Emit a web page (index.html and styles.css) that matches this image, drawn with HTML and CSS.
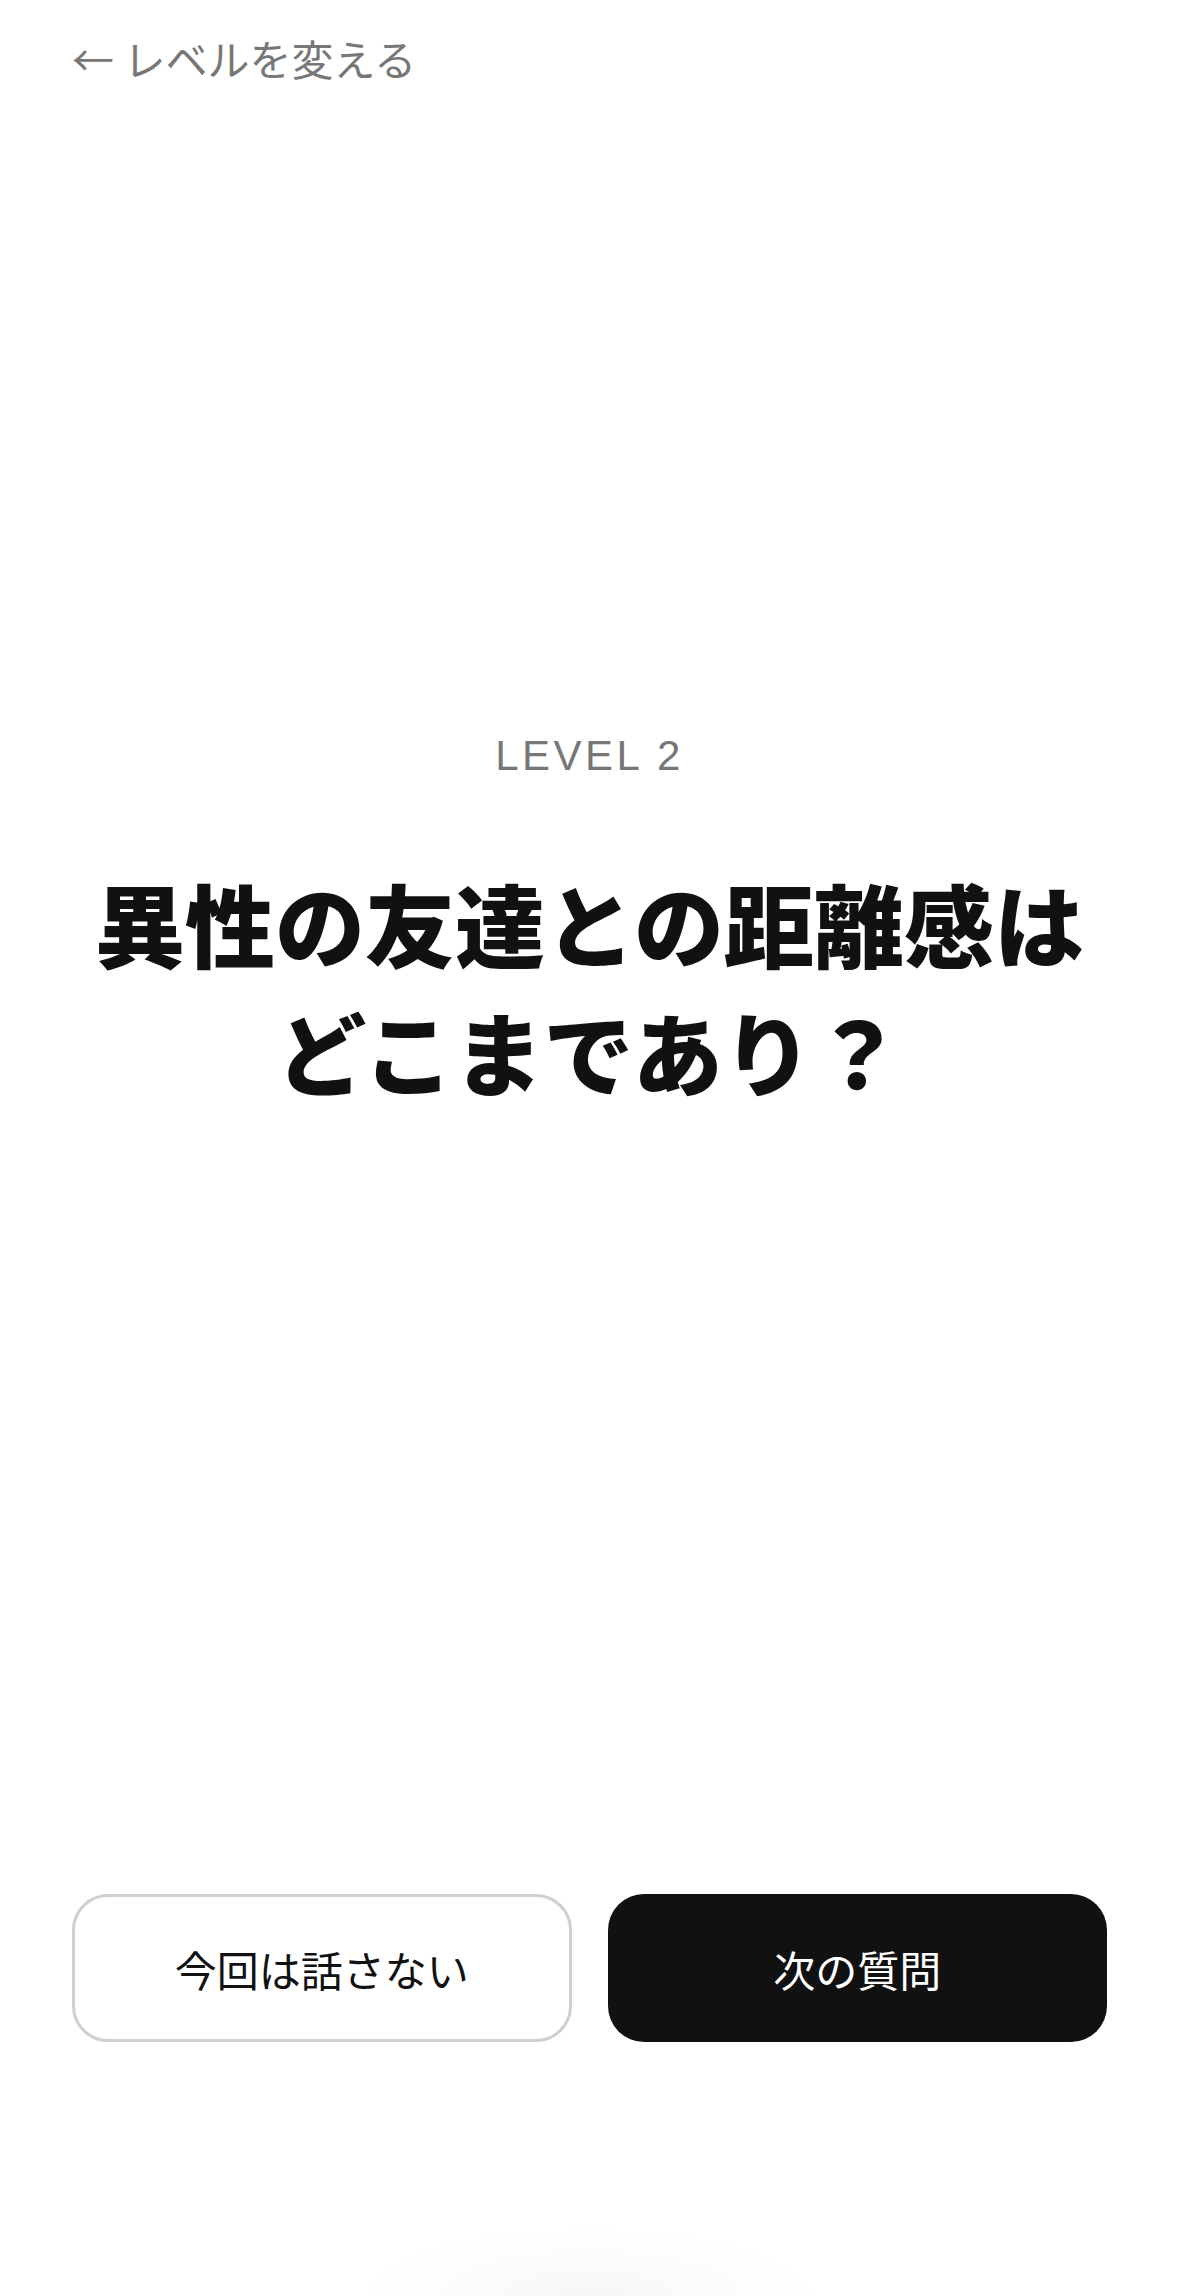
FILE: index.html
```html
<!DOCTYPE html>
<html lang="ja">
<head>
<meta charset="utf-8">
<title>LEVEL 2</title>
<link rel="stylesheet" href="styles.css">
</head>
<body>
<div class="page">
  <header class="header">
    <a class="back" href="#"><span class="back-arrow">←</span> レベルを変える</a>
  </header>
  <section class="question">
    <div class="level">LEVEL 2</div>
    <h1 class="headline">異性の友達との距離感は<br>どこまであり？</h1>
  </section>
  <div class="actions">
    <button class="btn btn-skip" type="button">今回は話さない</button>
    <button class="btn btn-next" type="button">次の質問</button>
  </div>
</div>
</body>
</html>
```

FILE: styles.css
```css
html, body {
  margin: 0;
  padding: 0;
  background: #ffffff;
}

body {
  font-family: "Noto Sans CJK JP", "Noto Sans", sans-serif;
  color: #111111;
}

.page {
  width: 1179px;
  height: 2296px;
  box-sizing: border-box;
  padding: 28px 72px 254px;
  display: flex;
  flex-direction: column;
  background: radial-gradient(ellipse 230px 70px at 50% 100%, #f6f6f6 0%, #fbfbfb 45%, #ffffff 100%);
}

.header {
  height: 60px;
  display: flex;
  align-items: center;
}

.back {
  font-size: 42px;
  line-height: 60px;
  color: #777777;
  text-decoration: none;
  white-space: nowrap;
}

.question {
  margin-top: 643px;
  display: flex;
  flex-direction: column;
  align-items: center;
  text-align: center;
}

.level {
  font-family: "Liberation Sans", "Noto Sans", sans-serif;
  font-size: 42px;
  line-height: 1.2;
  letter-spacing: 3.5px;
  color: #777777;
}

.headline {
  margin: 77px 0 0;
  font-size: 90px;
  line-height: 128px;
  font-weight: 900;
  color: #111111;
  white-space: nowrap;
}

.actions {
  margin-top: auto;
  display: grid;
  grid-template-columns: 1fr 1fr;
  gap: 36px;
}

.btn {
  height: 148px;
  border-radius: 36px;
  font-family: "Noto Sans CJK JP", "Noto Sans", sans-serif;
  font-size: 42px;
  font-weight: 400;
  cursor: pointer;
  box-sizing: border-box;
  padding: 0;
}

.btn-skip {
  background: #ffffff;
  border: 3px solid #cfcfcf;
  color: #111111;
}

.btn-next {
  background: #111111;
  border: 0;
  color: #ffffff;
}
```
